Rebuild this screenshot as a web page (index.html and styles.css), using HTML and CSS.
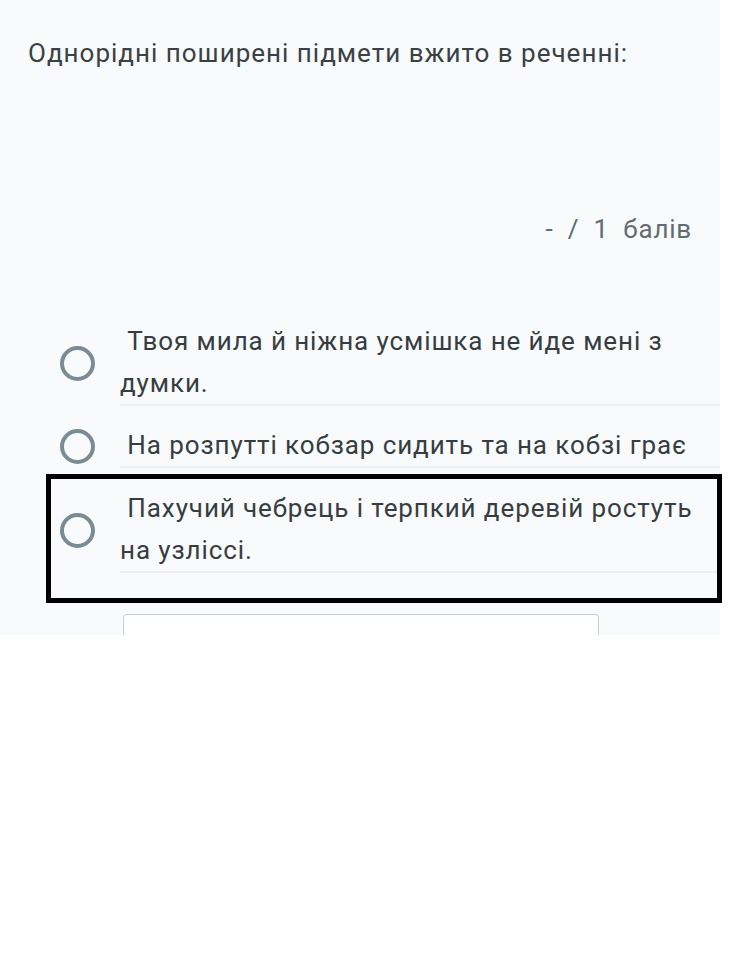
FILE: index.html
```
<!DOCTYPE html>
<html lang="uk">
<head>
    <meta charset="UTF-8">
    <meta name="viewport" content="width=device-width, initial-scale=1.0">
    <title>Питання</title>
    <link rel="stylesheet" href="styles.css">
</head>
<body>
    <div class="panel">
        <p class="question">Однорідні поширені підмети вжито в реченні:</p>

        <div class="points">- / 1 балів</div>

        <div class="options">
            <div class="option">
                <span class="radio"></span>
                <div class="label">&nbsp;Твоя мила й ніжна усмішка не йде мені з думки.</div>
            </div>
            <div class="option">
                <span class="radio"></span>
                <div class="label">&nbsp;На розпутті кобзар сидить та на кобзі грає</div>
            </div>
            <div class="option option-marked">
                <span class="radio"></span>
                <div class="label">&nbsp;Пахучий чебрець і терпкий деревій ростуть на узліссі.</div>
            </div>
        </div>

        <div class="answer-box"></div>
    </div>
</body>
</html>
```

FILE: styles.css
```
* {
    margin: 0;
    padding: 0;
    box-sizing: border-box;
}
body {
    background: #fff;
    font-family: Roboto, "Noto Sans", sans-serif;
}
.panel {
    width: 720px;
    height: 635px;
    background: #f8fafc;
    padding-top: 37px;
}
.question {
    padding-left: 28px;
    font-size: 26px;
    line-height: 32px;
    letter-spacing: 1px;
    color: #3a4145;
}
.points {
    margin-top: 144px;
    padding-right: 28px;
    text-align: right;
    font-size: 26px;
    line-height: 32px;
    letter-spacing: 0.8px;
    word-spacing: 7px;
    color: #5f6d72;
}
.options {
    margin-top: 75px;
}
.option {
    display: flex;
    align-items: center;
    padding-top: 18px;
}
.option:first-child {
    padding-top: 0;
}
.radio {
    flex: none;
    width: 35px;
    height: 35px;
    margin-left: 60px;
    margin-right: 25px;
    border: 4px solid #7a8c93;
    border-radius: 50%;
}
.label {
    flex: 1;
    font-size: 26px;
    line-height: 42px;
    letter-spacing: 0.9px;
    color: #363d41;
    border-bottom: 2px solid #eceff2;
}
.option-marked {
    width: 676px;
    margin-top: 6px;
    margin-left: 46px;
    padding: 8px 0 25px;
    border: 5px solid #000;
}
.option-marked .radio {
    margin-left: 9px;
}
.answer-box {
    width: 476px;
    height: 21px;
    margin: 11px 0 0 123px;
    background: #fff;
    border: 1px solid #c9ced1;
    border-bottom: none;
    border-radius: 4px 4px 0 0;
}
```
